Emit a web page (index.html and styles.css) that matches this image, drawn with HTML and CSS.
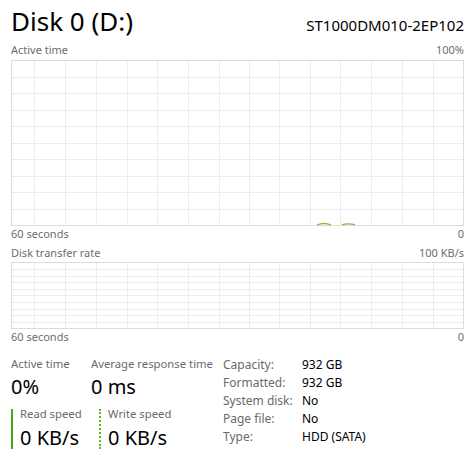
FILE: index.html
```html
<!DOCTYPE html>
<html>
<head>
<meta charset="utf-8">
<link rel="stylesheet" href="styles.css">
</head>
<body>
<div class="panel">
  <div class="header">
    <h1 class="title">Disk 0 (D:)</h1>
    <div class="model">ST1000DM010-2EP102</div>
  </div>

  <div class="axis axis-top"><span>Active time</span><span>100%</span></div>
  <svg class="chart chart-active" width="453" height="166" viewBox="0 0 453 166">
    <g class="grid">
      <path d="M23.5 0V166M54.5 0V166M85.5 0V166M116.5 0V166M146.5 0V166M177.5 0V166M208.5 0V166M238.5 0V166M268.5 0V166M299.5 0V166M329.5 0V166M360.5 0V166M391.5 0V166M422.5 0V166"/>
      <path d="M0 17.5H453M0 33.5H453M0 50.5H453M0 66.5H453M0 83.5H453M0 99.5H453M0 116.5H453M0 132.5H453M0 149.5H453"/>
    </g>
    <rect class="frame" x="0.5" y="0.5" width="452" height="165"/>
    <path class="trace" d="M306 165Q313 162 320 165M331 164.6Q337.5 163.2 344 164.6"/>
  </svg>
  <div class="axis"><span>60 seconds</span><span>0</span></div>

  <div class="axis axis-second"><span>Disk transfer rate</span><span>100 KB/s</span></div>
  <svg class="chart chart-rate" width="453" height="67" viewBox="0 0 453 67">
    <g class="grid">
      <path d="M23.5 0V67M54.5 0V67M85.5 0V67M116.5 0V67M146.5 0V67M177.5 0V67M208.5 0V67M238.5 0V67M268.5 0V67M299.5 0V67M329.5 0V67M360.5 0V67M391.5 0V67M422.5 0V67"/>
      <path d="M0 7.5H453M0 14.5H453M0 20.5H453M0 27.5H453M0 33.5H453M0 40.5H453M0 47.5H453M0 53.5H453M0 60.5H453"/>
    </g>
    <rect class="frame" x="0.5" y="0.5" width="452" height="66"/>
  </svg>
  <div class="axis"><span>60 seconds</span><span>0</span></div>

  <div class="stats">
    <div class="live">
      <div class="metric metric-active">
        <div class="label">Active time</div>
        <div class="value">0%</div>
      </div>
      <div class="metric metric-response">
        <div class="label">Average response time</div>
        <div class="value">0 ms</div>
      </div>
      <div class="metric speed read">
        <div class="label">Read speed</div>
        <div class="value">0 KB/s</div>
      </div>
      <div class="metric speed write">
        <div class="label">Write speed</div>
        <div class="value">0 KB/s</div>
      </div>
    </div>
    <dl class="props">
      <dt>Capacity:</dt><dd>932 GB</dd>
      <dt>Formatted:</dt><dd>932 GB</dd>
      <dt>System disk:</dt><dd>No</dd>
      <dt>Page file:</dt><dd>No</dd>
      <dt>Type:</dt><dd>HDD (SATA)</dd>
    </dl>
  </div>
</div>
</body>
</html>
```

FILE: styles.css
```css
html, body {
  margin: 0;
  padding: 0;
  background: #ffffff;
}

body {
  font-family: "Noto Sans", "Open Sans", sans-serif;
  color: #000000;
}

.panel {
  width: 453px;
  padding-left: 11px;
  display: flex;
  flex-direction: column;
}

.header {
  display: flex;
  justify-content: space-between;
  align-items: baseline;
  height: 42px;
}

.title {
  margin: 0;
  font-weight: 400;
  font-size: 26px;
  line-height: 42px;
  height: 42px;
}

.model {
  font-size: 15px;
  line-height: 42px;
}

.axis {
  display: flex;
  justify-content: space-between;
  font-size: 11px;
  line-height: 16px;
  height: 16px;
  color: #6d6d6d;
}

.axis-top {
  margin-bottom: 2px;
}

.axis-second {
  margin-top: 3px;
  margin-bottom: 1px;
}

.chart {
  display: block;
  shape-rendering: crispEdges;
}

.grid path {
  stroke: #ececec;
  stroke-width: 1;
  fill: none;
}

.frame {
  fill: none;
  stroke: #dcdcdc;
  stroke-width: 1;
}

.trace {
  fill: none;
  stroke: #7ac143;
  stroke-width: 1.3;
  shape-rendering: geometricPrecision;
}

.stats {
  margin-top: 11px;
  display: flex;
}

.live {
  width: 212px;
  display: grid;
  grid-template-columns: 88px 1fr;
  grid-template-rows: 43px 40px;
  row-gap: 10px;
}

.metric-response {
  margin-left: -8px;
}

.label {
  font-size: 11.3px;
  line-height: 16px;
  color: #6a6a6a;
  white-space: nowrap;
}

.value {
  font-size: 20px;
  line-height: 24px;
  margin-top: 3px;
}

.speed {
  padding-left: 7px;
  height: 40px;
}

.speed .label {
  line-height: 10px;
}

.speed .value {
  margin-top: 7px;
}

.read {
  border-left: 2px solid #4da60c;
}

.write {
  border-left: 2px dotted #66b81e;
}

.props {
  margin: 0;
  display: grid;
  grid-template-columns: 79px 1fr;
  grid-auto-rows: 18px;
  font-size: 12px;
  line-height: 18px;
}

.props dt {
  color: #6a6a6a;
}

.props dd {
  margin: 0;
  color: #000000;
}
```
